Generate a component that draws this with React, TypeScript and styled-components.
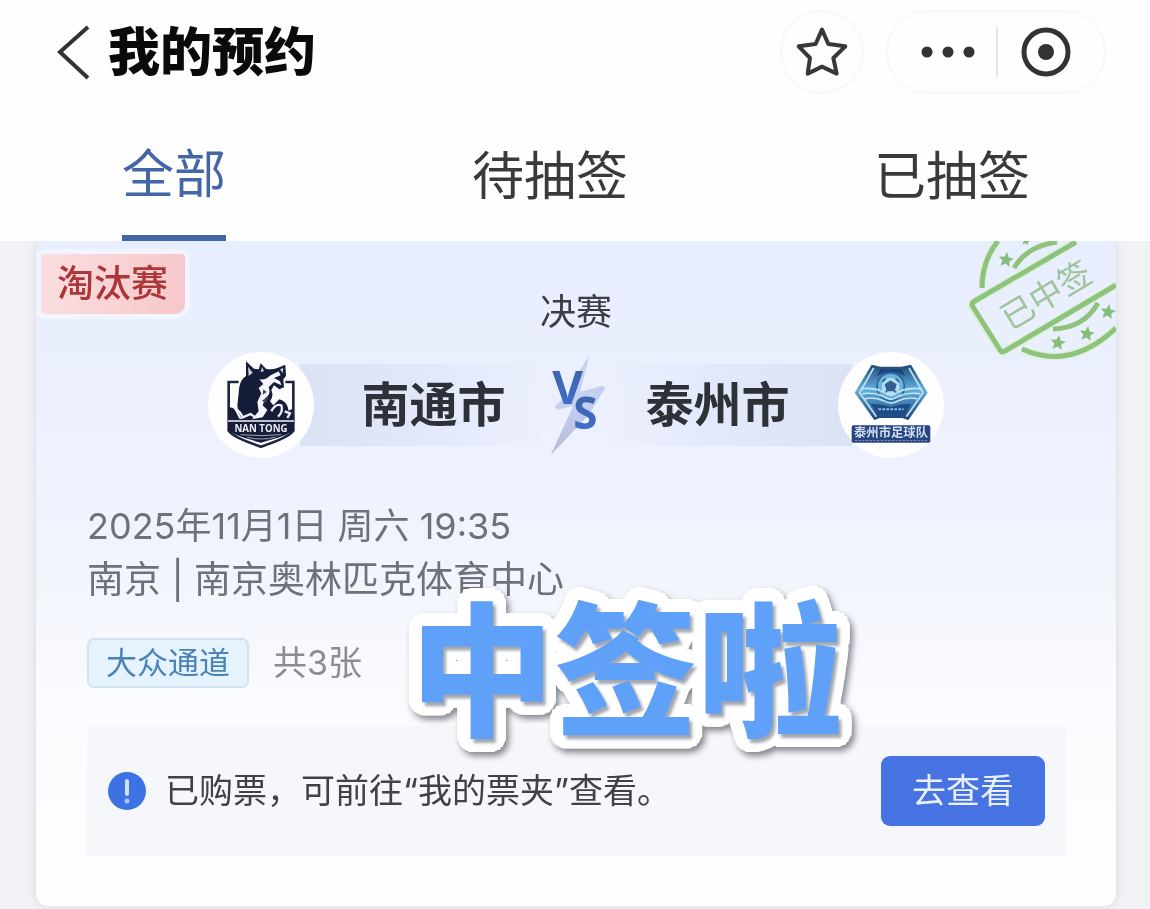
import React from "react";
import styled, { createGlobalStyle } from "styled-components";

const GlobalStyle = createGlobalStyle`
  *, *::before, *::after { box-sizing: border-box; }
  body {
    margin: 0;
    background: #f1f2f5;
    font-family: Inter, "Noto Sans CJK SC", sans-serif;
    color: #333538;
  }
  button { font: inherit; border: 0; background: none; padding: 0; cursor: pointer; }
  h1, h2, h3, p { margin: 0; font-weight: 400; }
  svg { display: block; flex: none; }
`;

const Page = styled.div`
  min-height: 100vh;
  overflow: hidden;
`;

const Top = styled.header`
  background: #fefefe;
`;

const TitleBar = styled.div`
  display: flex;
  align-items: center;
  height: 104px;
  padding: 0 44px 0 56px;
`;

const BackButton = styled.button`
  margin-right: 16px;
`;

const PageTitle = styled.h1`
  flex: 1;
  padding-top: 2px;
  font-size: 52px;
  line-height: 64px;
  font-weight: 900;
  color: #0a0a0a;
`;

const RoundButton = styled.button`
  display: grid;
  place-items: center;
  width: 84px;
  height: 84px;
  margin-right: 22px;
  border: 2px solid #f8f8f8;
  border-radius: 50%;
`;

const Capsule = styled.div`
  display: flex;
  align-items: center;
  width: 220px;
  height: 84px;
  border: 2px solid #f8f8f8;
  border-radius: 42px;
`;

const CapsuleButton = styled.button<{ $side: "left" | "right" }>`
  display: grid;
  place-items: center;
  flex: 1;
  height: 50px;
  padding: ${(p) => (p.$side === "left" ? "0 0 0 12px" : "0 10px 0 0")};
  border-left: ${(p) => (p.$side === "right" ? "2px solid #e4e4e4" : "0")};
`;

const Tabs = styled.nav`
  display: flex;
  justify-content: space-between;
  padding: 0 120px 0 122px;
`;

const Tab = styled.button<{ $active?: boolean }>`
  height: 137px;
  padding-top: ${(p) => (p.$active ? "11px" : "15px")};
  border-bottom: 6px solid ${(p) => (p.$active ? "#4464a8" : "transparent")};
  font-size: 52px;
  line-height: 64px;
  color: ${(p) => (p.$active ? "#4466a6" : "#3a3a3c")};
`;

const Card = styled.main`
  position: relative;
  margin: 0 34px 3px 36px;
  padding: 13px 0 50px;
  overflow: hidden;
  border-radius: 0 0 12px 12px;
  background: linear-gradient(#e7eefe 0%, #eef1fe 32%, #f1f3fd 46%, #f7f9fe 62%, #fbfcfe 76%, #fefefe 100%);
`;

const CardShadow = styled.div`
  filter: drop-shadow(0 0 4px rgba(90, 95, 110, 0.16));
  clip-path: inset(0 0 -10px 0);
`;

const CardHead = styled.div`
  display: grid;
  grid-template-columns: 1fr auto 1fr;
  align-items: start;
  padding: 0 5px;
`;

const StageTag = styled.span`
  justify-self: start;
  padding: 0 17px 0 16px;
  border-radius: 4px 4px 10px 4px;
  background: linear-gradient(100deg, #fadfe0, #f7c7ca);
  box-shadow: 0 0 0 5px rgba(248, 248, 255, 0.6);
  font-size: 37px;
  line-height: 60px;
  font-weight: 500;
  color: #ad3638;
`;

const RoundName = styled.h2`
  padding-top: 36px;
  font-size: 36px;
  line-height: 44px;
  color: #3c3e46;
`;

const Match = styled.section`
  display: flex;
  align-items: center;
  justify-content: center;
  margin-top: 18px;
`;

const Crest = styled.div`
  z-index: 1;
  width: 106px;
  height: 106px;
  border-radius: 50%;
  background: #fefefe;
`;

const TeamName = styled.h3<{ $side: "home" | "away" }>`
  margin: ${(p) => (p.$side === "home" ? "0 0 0 -14px" : "0 -14px 0 0")};
  padding: ${(p) => (p.$side === "home" ? "0 39px 0 61px" : "0 62px 0 39px")};
  background: linear-gradient(
    ${(p) => (p.$side === "home" ? "90deg" : "270deg")},
    #dbe2f4,
    #e1e9fb 55%,
    rgba(232, 238, 254, 0)
  );
  font-size: 48px;
  line-height: 82px;
  font-weight: 700;
  color: #2f3138;
`;

const Details = styled.section`
  padding: 0 50px 0 51px;
`;

const Kickoff = styled.p`
  font-size: 36px;
  line-height: 54px;
  color: #6d717b;
`;

const Venue = styled(Kickoff)`
  font-size: 37px;
`;

const Meta = styled.div`
  margin-top: 41px;
`;

const Channel = styled.div`
  display: flex;
  align-items: center;
  gap: 24px;
  margin-top: 31px;
`;

const Chip = styled.span`
  height: 50px;
  padding: 0 17px;
  border: 2px solid #d2e2f2;
  border-radius: 7px;
  background: #e5f3fe;
  font-size: 31px;
  line-height: 46px;
  color: #4a82b6;
`;

const Count = styled.span`
  font-size: 34px;
  line-height: 46px;
  color: #8c8d91;
`;

const Notice = styled.div`
  display: flex;
  align-items: center;
  height: 130px;
  margin-top: 38px;
  padding: 0 21px;
  background: #f5f7fb;
`;

const NoticeText = styled.p`
  flex: 1;
  margin-left: 19px;
  font-size: 34px;
  line-height: 50px;
  color: #404247;
`;

const ViewButton = styled.button`
  width: 164px;
  height: 70px;
  border-radius: 9px;
  background: #4672e2;
  font-size: 34px;
  line-height: 50px;
  color: #e9f0ff;
`;

const Stamp = styled.svg`
  position: absolute;
  top: 0;
  right: 0;
`;

const ring = (radius: number) =>
  Array.from({ length: 36 }, (_, i) => {
    const a = (i / 36) * Math.PI * 2;
    return `${Math.round(Math.cos(a) * radius)}px ${Math.round(Math.sin(a) * radius)}px 0 #fff`;
  }).join(", ");

const Sticker = styled.strong`
  position: absolute;
  left: 374px;
  top: 332px;
  font-size: 144px;
  line-height: 200px;
  font-weight: 900;
  white-space: nowrap;
  color: #5fa1f8;
  text-shadow: 3px 4px 3px rgba(70, 80, 100, 0.5), ${ring(13)}, ${ring(8)};
  filter: drop-shadow(3px 4px 3px rgba(60, 60, 70, 0.6));
  pointer-events: none;
`;

function starPoints(cx: number, cy: number, r: number) {
  return Array.from({ length: 10 }, (_, i) => {
    const a = -Math.PI / 2 + (i * Math.PI) / 5 + 0.15;
    const d = i % 2 ? r * 0.45 : r;
    return `${cx + Math.cos(a) * d},${cy + Math.sin(a) * d}`;
  }).join(" ");
}

function WonStamp() {
  return (
    <Stamp width="150" height="125" viewBox="0 0 150 125" role="img" aria-label="已中签">
      <g fill="none" stroke="#d3f5c4" strokeWidth="8" opacity="0.6">
        <path d="M109 1 L6 62 Q4 64 6 67 L34 109 Q36 112 39 110 L150 44" />
        <path d="M16 47 Q16 20 32 0 M56 108 Q104 130 150 87" />
      </g>
      <g fill="none" stroke="#8fc27c" strokeWidth="5" strokeLinejoin="round">
        <path d="M110 1 L7 61 Q5 63 7 66 L34 109 Q36 112 39 110 L150 44" />
        <path d="M16 47 Q16 20 32 0" />
        <path d="M56 108 Q104 130 150 87" />
        <path d="M48 27 Q61 5 91 1" />
        <path d="M87 88 Q118 87 132 62" />
      </g>
      <g fill="#86bd78">
        <polygon points={starPoints(40, 19, 8)} />
        <polygon points={starPoints(92, 102, 8)} />
        <polygon points={starPoints(121, 93, 8)} />
        <polygon points={starPoints(142, 71, 8)} />
        <polygon points={starPoints(60, 0, 5)} />
      </g>
      <text
        transform="translate(80 54) rotate(-31)"
        textAnchor="middle"
        dy="12"
        fontSize="33"
        fontFamily="'Noto Sans CJK SC', sans-serif"
        fontWeight="400"
        fill="#9fc49a"
      >
        已中签
      </text>
    </Stamp>
  );
}

function NantongCrest() {
  return (
    <svg width="106" height="106" viewBox="24 36 318 318" role="img" aria-label="南通">
      <path d="M116 126 H86 V272 Q98 292 183 320 Q268 292 280 272 V126 H256" fill="none" stroke="#1d2540" strokeWidth="8" />
      <path d="M84 206 Q98 196 108 216 L118 236 H282 V262 H84 Z" fill="#161d38" />
      <path d="M138 64 L162 86 L176 88 L182 70 L198 86 Q214 90 232 84 L256 74 L258 108 L250 118 L252 142 L238 148 L222 136 L214 150 Q222 170 210 184 L220 196 L238 178 Q262 184 266 212 L278 206 V240 H130 Q112 222 112 196 L118 140 Q122 118 138 108 Z" fill="#161d38" />
      <path d="M144 80 L158 98 L146 108 Z M186 80 L192 94 L182 96 Z M240 88 L250 84 L248 100 Z" fill="#c9cedd" />
      <path d="M178 118 Q196 122 212 106 L236 94 L242 106 L222 114 L240 124 L244 136 L222 126 L206 142 Q214 164 196 174 L188 196 L202 210 L188 232 L156 238 L176 214 L172 186 L184 160 L176 144 L190 132 Z" fill="#f4f6fb" />
      <path d="M190 148 L200 156 L188 164 Z M186 182 L206 168 L198 190 Z" fill="#3b435f" />
      <path d="M104 204 Q122 216 128 232 L152 222 L166 232 M214 214 Q226 190 244 196 Q250 216 234 230 M254 214 L270 220 L262 234" fill="none" stroke="#eef1f8" strokeWidth="7" />
      <path d="M84 243 H282" stroke="#f4f6fb" strokeWidth="4" />
      <path d="M86 247 H280 V270 Q268 286 183 308 Q98 286 86 270 Z" fill="#161d38" />
      <text x="183" y="275" textAnchor="middle" fontSize="29" fontWeight="700" fontFamily="'Open Sans', sans-serif" fill="#eceef4">
        NAN TONG
      </text>
      <path d="M122 284 Q183 290 244 284 M142 292 Q183 302 226 292" fill="none" stroke="#9aa2b8" strokeWidth="3" />
    </svg>
  );
}

function TaizhouCrest() {
  return (
    <svg width="106" height="106" viewBox="57 36 318 318" role="img" aria-label="泰州市足球队">
      <defs>
        <linearGradient id="tz" x1="0" y1="0" x2="0" y2="1">
          <stop offset="0" stopColor="#1f4676" />
          <stop offset="0.45" stopColor="#62b2e0" />
          <stop offset="1" stopColor="#183f78" />
        </linearGradient>
      </defs>
      <path d="M158 74 L184 80 H248 L276 74 L326 158 L268 240 L250 234 H182 L166 240 L107 158 Z" fill="url(#tz)" />
      <path d="M164 84 L122 158 L172 230 M270 84 L312 158 L262 230" fill="none" stroke="#c5e4f4" strokeWidth="5" />
      <path d="M184 86 H248 L258 108 Q216 84 174 108 Z" fill="#1d467f" />
      <circle cx="215" cy="140" r="41" fill="#69b3dd" stroke="#2a639e" strokeWidth="5" />
      <circle cx="215" cy="140" r="27" fill="#b5dbef" />
      <path d="M215 124 L230 134 L225 151 H205 L200 134 Z M190 126 L200 116 M240 126 L230 116 M205 151 L196 162 M225 151 L236 162" fill="#315f96" stroke="#315f96" strokeWidth="5" />
      <path d="M126 146 Q164 142 190 154 Q215 174 242 154 Q268 142 308 146 M130 161 Q168 156 194 170 Q215 186 238 170 Q264 156 304 161 M138 176 Q168 170 194 182 Q215 196 238 182 Q264 170 294 176" fill="none" stroke="#c4e4f2" strokeWidth="5" />
      <path d="M156 192 Q190 192 215 202 Q242 192 276 192 L256 226 H178 Z" fill="#1c4b86" />
      <path d="M178 208 H254" stroke="#8abbe0" strokeWidth="6" strokeDasharray="8 4" />
      <rect x="98" y="256" width="236" height="52" rx="5" fill="#29457d" />
      <text x="216" y="291" textAnchor="middle" fontSize="37" fontWeight="700" fontFamily="'Noto Sans CJK SC', sans-serif" fill="#d0def3">
        泰州市足球队
      </text>
      <path d="M108 302 H324" stroke="#7d97c4" strokeWidth="3" strokeDasharray="7 4" />
    </svg>
  );
}

function Versus() {
  return (
    <svg width="62" height="104" viewBox="75 36 186 312" role="img" aria-label="VS">
      <defs>
        <linearGradient id="vs" x1="0" y1="0" x2="0" y2="1">
          <stop offset="0" stopColor="#3e639f" />
          <stop offset="1" stopColor="#3f6fd3" />
        </linearGradient>
        <linearGradient id="bolt" x1="0" y1="0" x2="0" y2="1">
          <stop offset="0" stopColor="#c5c8dc" />
          <stop offset="0.5" stopColor="#b3c5f0" />
          <stop offset="1" stopColor="#a4a9c2" />
        </linearGradient>
      </defs>
      <path d="M209 42 L180 86 L150 156 L104 196 L112 206 L160 194 L92 342 L206 222 L256 140 L248 134 L180 152 Z" fill="url(#bolt)" opacity="0.75" />
      <g fontFamily="'Open Sans', sans-serif" fontWeight="700" fill="url(#vs)">
        <text x="97" y="190" fontSize="142">V</text>
        <text x="160" y="265" fontSize="132">S</text>
      </g>
    </svg>
  );
}

export default function App() {
  return (
    <Page>
      <GlobalStyle />
      <Top>
        <TitleBar>
          <BackButton aria-label="返回">
            <svg width="36" height="60" viewBox="0 0 36 60" fill="none" stroke="#333" strokeWidth="4">
              <path d="M32 5 L4 30 L32 56" />
            </svg>
          </BackButton>
          <PageTitle>我的预约</PageTitle>
          <RoundButton aria-label="收藏">
            <svg width="60" height="60" viewBox="97 65 180 180" fill="none" stroke="#383838" strokeWidth="12" strokeLinejoin="round">
              <path d="M187 88 L206 131 L257 138 L221 173 L231 220 L187 199 L144 220 L151 173 L117 138 L168 131 Z" />
            </svg>
          </RoundButton>
          <Capsule>
            <CapsuleButton $side="left" aria-label="更多">
              <svg width="54" height="12" viewBox="0 0 54 12" fill="#333">
                <circle cx="6" cy="6" r="5.5" />
                <circle cx="27" cy="6" r="5.5" />
                <circle cx="48" cy="6" r="5.5" />
              </svg>
            </CapsuleButton>
            <CapsuleButton $side="right" aria-label="关闭">
              <svg width="50" height="50" viewBox="0 0 50 50">
                <circle cx="25" cy="25" r="22" fill="none" stroke="#333" strokeWidth="5" />
                <circle cx="25" cy="25" r="8" fill="#333" />
              </svg>
            </CapsuleButton>
          </Capsule>
        </TitleBar>
        <Tabs>
          <Tab $active>全部</Tab>
          <Tab>待抽签</Tab>
          <Tab>已抽签</Tab>
        </Tabs>
      </Top>
      <CardShadow>
        <Card>
          <WonStamp />
          <CardHead>
            <StageTag>淘汰赛</StageTag>
            <RoundName>决赛</RoundName>
          </CardHead>
          <Match>
            <Crest>
              <NantongCrest />
            </Crest>
            <TeamName $side="home">南通市</TeamName>
            <Versus />
            <TeamName $side="away">泰州市</TeamName>
            <Crest>
              <TaizhouCrest />
            </Crest>
          </Match>
          <Details>
            <Meta>
              <Kickoff>2025年11月1日 周六 19:35</Kickoff>
              <Venue>南京 | 南京奥林匹克体育中心</Venue>
            </Meta>
            <Channel>
              <Chip>大众通道</Chip>
              <Count>共3张</Count>
            </Channel>
            <Notice>
              <svg width="38" height="38" viewBox="0 0 38 38" aria-hidden="true">
                <circle cx="19" cy="19" r="19" fill="#3c72e4" />
                <path d="M19 9 V22" stroke="#cfe2ff" strokeWidth="4" strokeLinecap="round" />
                <circle cx="19" cy="29" r="2.5" fill="#a9c8fb" />
              </svg>
              <NoticeText>已购票，可前往“我的票夹”查看。</NoticeText>
              <ViewButton>去查看</ViewButton>
            </Notice>
          </Details>
          <Sticker>中签啦</Sticker>
        </Card>
      </CardShadow>
    </Page>
  );
}
